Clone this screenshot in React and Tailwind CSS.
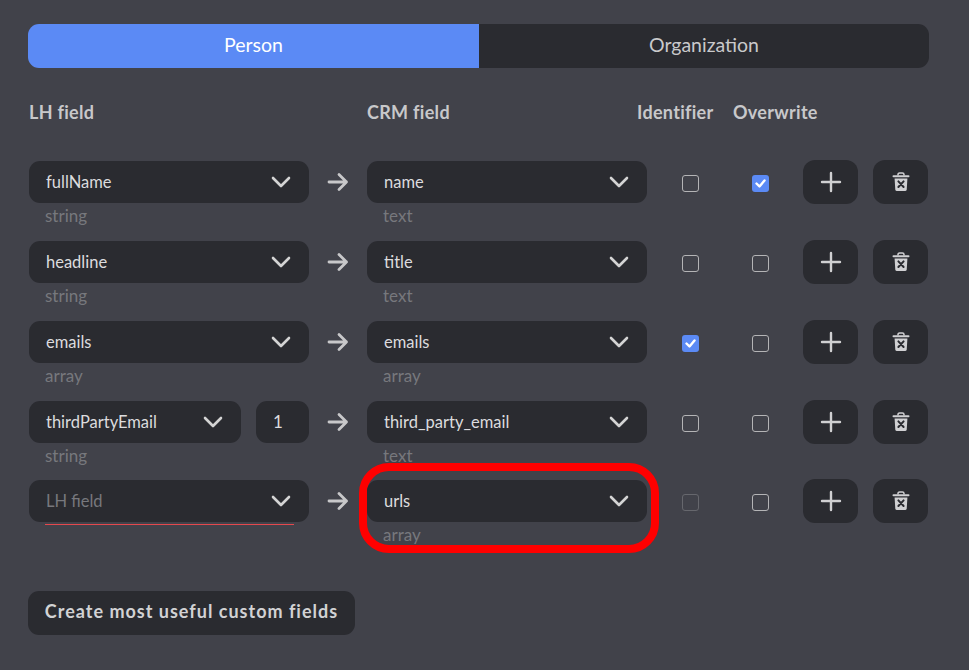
import React from 'react'

const rows = [
  { lh: 'fullName', lhType: 'string', crm: 'name', crmType: 'text', overwrite: true },
  { lh: 'headline', lhType: 'string', crm: 'title', crmType: 'text' },
  { lh: 'emails', lhType: 'array', crm: 'emails', crmType: 'array', identifier: true },
  { lh: 'thirdPartyEmail', lhType: 'string', crm: 'third_party_email', crmType: 'text', index: '1' },
  { lh: '', lhType: '', crm: 'urls', crmType: 'array', disabled: true, error: true, marked: true }
]

const Chevron = () => (
  <svg width="20" height="12" viewBox="0 0 20 12" fill="none" stroke="#d4d4d4" strokeWidth="2.6" strokeLinecap="round" strokeLinejoin="round">
    <path d="M2 2l8 8 8-8" />
  </svg>
)

const Arrow = () => (
  <svg width="24" height="20" viewBox="0 0 24 20" fill="none" stroke="#c8c8ca" strokeWidth="2.8" strokeLinecap="round" strokeLinejoin="round">
    <path d="M3 10h17.5M13 2.5l7.5 7.5-7.5 7.5" />
  </svg>
)

const Plus = () => (
  <svg width="22" height="22" viewBox="0 0 22 22" fill="none" stroke="#d0d0d2" strokeWidth="2.4" strokeLinecap="round">
    <path d="M11 2v18M2 11h18" />
  </svg>
)

const Trash = () => (
  <svg width="18" height="20" viewBox="0 0 18 20">
    <path d="M6 3.5V2.6C6 1.6 6.8 1 7.6 1h2.8c.8 0 1.6.6 1.6 1.6v.9" fill="none" stroke="#d0d0d2" strokeWidth="1.5" />
    <rect x="0.5" y="3.2" width="17" height="2" rx="1" fill="#d0d0d2" />
    <path d="M2.6 6.4h12.8l-.7 11.4c-.1.7-.6 1.2-1.3 1.2H4.6c-.7 0-1.2-.5-1.3-1.2z" fill="#d0d0d2" />
    <path d="M6.4 9.4l5.2 5.6M11.6 9.4l-5.2 5.6" stroke="#2a2b30" strokeWidth="2" strokeLinecap="round" />
  </svg>
)

const Checkbox = ({ checked, disabled }) => {
  if (checked) {
    return (
      <div className="w-[17px] h-[17px] rounded-[3px] bg-[#5b8af5] flex items-center justify-center">
        <svg width="11" height="9" viewBox="0 0 11 9" fill="none" stroke="#fff" strokeWidth="2.4" strokeLinecap="round" strokeLinejoin="round">
          <path d="M1.5 4.5l3 3 5-6" />
        </svg>
      </div>
    )
  }
  return <div className={`w-[17px] h-[17px] rounded-[3px] border ${disabled ? 'border-[#66676d]' : 'border-[#b4b4b6]'}`} />
}

const Select = ({ value, placeholder, type, error, className, marked }) => (
  <div className={`relative shrink-0 ${className}`}>
    {marked && (
      <div className="absolute left-[-8px] right-[-12px] top-[-17px] h-[90px] rounded-[30px] border-[8px] border-[#ff0000]" />
    )}
    <div className="h-[42px] rounded-[11px] bg-[#2a2b30] flex items-center justify-between pl-[17px] pr-[18px] relative">
      <span className={`text-[16.5px] pt-px ${value ? 'text-[#dcdcde]' : 'text-[#77787d]'}`}>{value || placeholder}</span>
      <Chevron />
    </div>
    {error && <div className="absolute left-4 right-[15px] top-[44px] h-px bg-[#e5484d]" />}
    {type && <div className="pl-4 mt-[2px] text-[17px] leading-[22px] text-[#77787d] relative">{type}</div>}
  </div>
)

const Row = ({ row, last }) => (
  <div className={`h-[80px] flex items-start ${last ? '-mt-px' : ''}`}>
    <div className="w-[280px] shrink-0 ml-px mt-px flex gap-[15px]">
      {row.index ? (
        <>
          <Select value={row.lh} type={row.lhType} className="w-[212px]" />
          <div className="w-[53px] h-[42px] pr-[9px] rounded-[11px] bg-[#2a2b30] flex items-center justify-center text-[17px] text-[#dcdcde]">{row.index}</div>
        </>
      ) : (
        <Select value={row.lh} placeholder="LH field" type={row.lhType} error={row.error} className="w-full" />
      )}
    </div>
    <div className="w-[58px] shrink-0 h-[42px] mt-px flex items-center justify-center"><Arrow /></div>
    <Select value={row.crm} type={row.crmType} marked={row.marked} className="w-[280px] mt-px" />
    <div className="w-[87px] shrink-0 h-[44px] pt-[3px] flex items-center justify-center"><Checkbox checked={row.identifier} disabled={row.disabled} /></div>
    <div className="w-[53px] shrink-0 h-[44px] pt-[3px] flex items-center justify-center"><Checkbox checked={row.overwrite} /></div>
    <div className="w-[55px] shrink-0 h-[44px] ml-4 rounded-[12px] bg-[#2a2b30] flex items-center justify-center"><Plus /></div>
    <div className="w-[55px] shrink-0 h-[44px] ml-[15px] rounded-[12px] bg-[#2a2b30] flex items-center justify-center"><Trash /></div>
  </div>
)

export default function App() {
  return (
    <div className="h-[670px] bg-[#41424a] pt-6 pl-7 pr-10 overflow-hidden font-['Lato','Liberation_Sans',sans-serif]">
      {/* Tabs */}
      <div className="flex h-11 rounded-[11px] overflow-hidden text-[19.5px]">
        <div className="w-[451px] pb-[2px] bg-[#5b8af5] text-white flex items-center justify-center">Person</div>
        <div className="flex-1 pb-[2px] bg-[#2a2b30] text-[#c9c9cb] flex items-center justify-center">Organization</div>
      </div>

      {/* Column headers */}
      <div className="flex mt-[32px] h-[24px] mb-[36px] items-center text-[18px] font-bold tracking-[0.3px] text-[#c8c8ca]">
        <div className="w-[339px] pl-px">LH field</div>
        <div className="w-[270px]">CRM field</div>
        <div className="w-[96px]">Identifier</div>
        <div>Overwrite</div>
      </div>

      {rows.map((row, i) => (
        <Row key={i} row={row} last={i === rows.length - 1} />
      ))}

      <div className="mt-[32px] w-[327px] h-[44px] pb-[3px] rounded-[11px] bg-[#2a2b30] flex items-center justify-center text-[18px] font-bold text-[#d2d2d4] tracking-[1px]">
        Create most useful custom fields
      </div>
    </div>
  )
}
